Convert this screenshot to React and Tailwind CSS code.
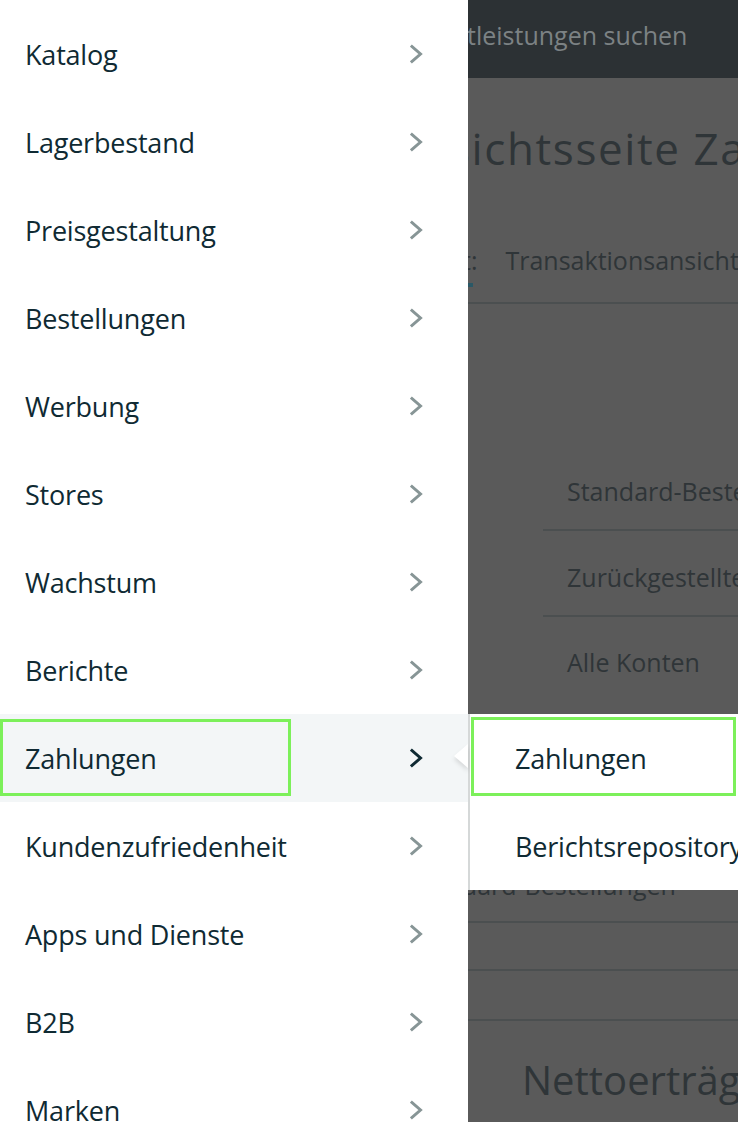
import React from "react";

const items = [
  "Katalog",
  "Lagerbestand",
  "Preisgestaltung",
  "Bestellungen",
  "Werbung",
  "Stores",
  "Wachstum",
  "Berichte",
  "Zahlungen",
  "Kundenzufriedenheit",
  "Apps und Dienste",
  "B2B",
  "Marken",
];

function Chevron({ active }) {
  return (
    <svg width="14" height="20" viewBox="0 0 14 20" fill="none">
      <path
        d="M2 2.5 L10.5 10 L2 17.5"
        stroke={active ? "#0f2a33" : "#879596"}
        strokeWidth="3"
        strokeLinecap="square"
        strokeLinejoin="miter"
      />
    </svg>
  );
}

export default function App() {
  const font = { fontFamily: '"Open Sans", "Liberation Sans", sans-serif' };
  return (
    <div
      className="relative flex w-[738px] h-[1122px] overflow-hidden bg-[#5a5a5a]"
      style={font}
    >
      {/* Left drawer */}
      <div className="w-[468px] shrink-0 bg-white pt-[10px] z-10">
        {items.map((label) => {
          const active = label === "Zahlungen";
          return (
            <div
              key={label}
              className={`relative flex h-[88px] items-center justify-between pl-[25px] pr-[44px] ${
                active ? "bg-[#f3f6f7]" : ""
              }`}
            >
              {active && (
                <div className="absolute left-0 top-[5px] h-[77px] w-[291px] border-[3px] border-[#7cf05a]" />
              )}
              <span className="text-[27px] leading-none text-[#0f2a33] tracking-[-0.2px] whitespace-nowrap">
                {label}
              </span>
              <Chevron active={active} />
            </div>
          );
        })}
      </div>

      {/* Dimmed page behind */}
      <div className="relative flex-1 overflow-hidden text-[#2f3538]">
        <div className="h-[78px] bg-[#2c3134] pt-[20px]">
          <div className="-ml-[1px] whitespace-nowrap text-[25px] leading-[30px] text-[#7c8284]">
            tleistungen suchen
          </div>
        </div>
        <div className="mt-[48px] -ml-[19px] whitespace-nowrap text-[44px] leading-[44px] tracking-[1.6px]">
          sichtsseite Zahlungen
        </div>
        <div className="mt-[77px] flex h-[26px] items-center whitespace-nowrap text-[25px] leading-none">
          <span className="-ml-[6px]">t:</span>
          <span className="ml-[28px]">Transaktionsansicht</span>
        </div>
        <div className="mt-[10px] h-[4px] w-[5px] bg-[#2a5866]" />
        <div className="mt-[15px] h-[2px] w-full bg-[#4b4f50]" />

        <div className="mt-[141px] ml-[75px]">
          <div className="flex h-[86px] items-center border-b-[2px] border-[#4b4f50] pl-[24px] pt-[8px] whitespace-nowrap text-[25px] leading-none">
            Standard-Bestellungen
          </div>
          <div className="flex h-[86px] items-center border-b-[2px] border-[#4b4f50] pl-[24px] pt-[8px] whitespace-nowrap text-[25px] leading-none">
            Zurückgestellte Transaktionen
          </div>
          <div className="flex h-[86px] items-center pl-[24px] pt-[4px] whitespace-nowrap text-[25px] leading-none">
            Alle Konten
          </div>
        </div>

        <div className="mt-[170px] h-[24px] -ml-[58px] whitespace-nowrap text-[25px] leading-[24px]">
          Standard-Bestellungen
        </div>
        <div className="mt-[24px] h-[2px] w-full bg-[#4b4f50]" />
        <div className="h-[46px]" />
        <div className="h-[2px] w-full bg-[#4b4f50]" />
        <div className="h-[48px]" />
        <div className="h-[2px] w-full bg-[#4b4f50]" />
        <div className="mt-[39px] ml-[54px] whitespace-nowrap text-[40px] leading-[40px]">
          Nettoerträge
        </div>
      </div>

      {/* Submenu flyout */}
      <div className="absolute left-[468px] top-[714px] z-20 h-[176px] w-[270px] border-l-[2px] border-[#d5d8d8] bg-white">
        <div className="absolute -left-[16px] top-[30px] h-0 w-0 border-y-[12px] border-r-[14px] border-y-transparent border-r-white drop-shadow-[0_3px_2px_rgba(0,0,0,0.12)]" />
        <div className="relative flex h-[88px] items-center pl-[45px]">
          <div className="absolute left-[1px] top-[3px] h-[79px] w-[265px] border-[3px] border-[#7cf05a]" />
          <span className="text-[27px] leading-none text-[#0f2a33] tracking-[-0.2px]">Zahlungen</span>
        </div>
        <div className="flex h-[88px] items-center pl-[45px] whitespace-nowrap">
          <span className="text-[27px] leading-none text-[#0f2a33] tracking-[-0.2px]">Berichtsrepository</span>
        </div>
      </div>
    </div>
  );
}
